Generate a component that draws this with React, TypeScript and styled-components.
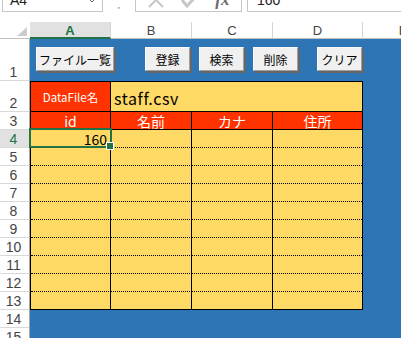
import { FC } from "react";
import styled, { createGlobalStyle, css } from "styled-components";

const GlobalStyle = createGlobalStyle`
  * {
    box-sizing: border-box;
  }
  body {
    margin: 0;
    background: #fff;
    font-family: "Noto Sans CJK JP", "Liberation Sans", sans-serif;
  }
`;

const BLUE = "#2e75b6";
const RED = "#ff3300";
const YELLOW = "#ffd966";
const GREEN = "#217346";

const COLUMNS = [
  { name: "A", width: 81 },
  { name: "B", width: 81 },
  { name: "C", width: 81 },
  { name: "D", width: 90 },
  { name: "E", width: 81 },
];

const ROWS = [
  { n: 1, h: 42 },
  { n: 2, h: 31 },
  { n: 3, h: 18 },
  ...Array.from({ length: 12 }, (_, i) => ({ n: i + 4, h: 18 })),
];

const BUTTONS = [
  { label: "ファイル一覧", width: 78, offset: 0 },
  { label: "登録", width: 45, offset: 31 },
  { label: "検索", width: 45, offset: 9 },
  { label: "削除", width: 45, offset: 9 },
  { label: "クリア", width: 45, offset: 19 },
];

const HEADERS = ["id", "名前", "カナ", "住所"];

const App = () => (
  <Page>
    <GlobalStyle />
    <FormulaBar>
      <NameBox>
        <span>A4</span>
        <svg width="8" height="5" viewBox="0 0 8 5">
          <path d="M1 1 L4 4 L7 1" fill="none" stroke="#666" strokeWidth="1" />
        </svg>
      </NameBox>
      <Dots>⋮</Dots>
      <FxBox>
        <svg width="18" height="18" viewBox="0 0 18 18">
          <path d="M2 2 L16 16 M16 2 L2 16" stroke="#c6c6c6" strokeWidth="2" />
        </svg>
        <svg width="20" height="18" viewBox="0 0 20 18">
          <path d="M2 9 L7 15 L18 3" fill="none" stroke="#c6c6c6" strokeWidth="3" />
        </svg>
        <Fx>fx</Fx>
      </FxBox>
      <ValueBox>160</ValueBox>
    </FormulaBar>

    <ColumnHeaderRow>
      <Corner>
        <svg width="10" height="9" viewBox="0 0 10 9">
          <polygon points="10,0 10,9 0,9" fill="#cdcdcd" />
        </svg>
      </Corner>
      {COLUMNS.map((c) => (
        <ColHead key={c.name} $w={c.width} $active={c.name === "A"}>
          {c.name}
        </ColHead>
      ))}
    </ColumnHeaderRow>

    <Body>
      <RowHeaders>
        {ROWS.map((r) => (
          <RowNum key={r.n} $h={r.h} $active={r.n === 4}>
            {r.n}
          </RowNum>
        ))}
      </RowHeaders>

      <BlueArea>
        <ButtonBar>
          {BUTTONS.map((b) => (
            <FormButton key={b.label} $w={b.width} $offset={b.offset}>
              {b.label}
            </FormButton>
          ))}
        </ButtonBar>

        <DataTable>
          <Cell $bg={RED} $color="#fff" $size={11.5} $align="center" $bottom="solid">
            DataFile名
          </Cell>
          <Cell $bg={YELLOW} $span={3} $last $size={16} $bottom="solid">
            <FileName>staff.csv</FileName>
          </Cell>

          {HEADERS.map((h, i) => (
            <Cell
              key={h}
              $bg={RED}
              $color="#fff"
              $size={14}
              $align="center"
              $bottom="solid"
              $last={i === HEADERS.length - 1}
            >
              {h}
            </Cell>
          ))}

          {Array.from({ length: 10 }, (_, row) =>
            HEADERS.map((h, col) => (
              <Cell
                key={`${row}-${h}`}
                $bg={YELLOW}
                $size={14}
                $align="flex-end"
                $bottom={row === 9 ? "none" : "dotted"}
                $last={col === HEADERS.length - 1}
                $selected={row === 0 && col === 0}
              >
                {row === 0 && col === 0 ? "160" : ""}
              </Cell>
            ))
          )}
        </DataTable>
      </BlueArea>
    </Body>
  </Page>
);

const Page = styled.div`
  width: 401px;
  height: 338px;
  overflow: hidden;
  display: flex;
  flex-direction: column;
`;

const FormulaBar = styled.div`
  display: flex;
  align-items: flex-end;
  height: 12px;
  padding-left: 2px;
  overflow: hidden;
  flex-shrink: 0;
`;

const boxBase = css`
  height: 24px;
  border: 1px solid #c6c6c6;
  display: flex;
  align-items: center;
  flex-shrink: 0;
`;

const NameBox = styled.div`
  ${boxBase}
  width: 101px;
  justify-content: space-between;
  padding: 0 6px 0 7px;
  font: 14px "Liberation Sans", sans-serif;
  color: #222;
`;

const Dots = styled.div`
  width: 32px;
  text-align: center;
  color: #a0a0a0;
  font: 14px "DejaVu Sans", sans-serif;
  align-self: center;
  margin-top: 12px;
  line-height: 0;
`;

const FxBox = styled.div`
  ${boxBase}
  width: 107px;
  justify-content: space-around;
  padding: 0 4px;
`;

const Fx = styled.span`
  font: italic bold 17px "Liberation Serif", serif;
  color: #6b6b6b;
`;

const ValueBox = styled.div`
  ${boxBase}
  flex: 1;
  margin-left: 5px;
  border-right: none;
  padding-left: 9px;
  font: 14px "Liberation Sans", sans-serif;
  color: #222;
`;

const ColumnHeaderRow = styled.div`
  display: flex;
  height: 17px;
  margin-top: 10px;
  flex-shrink: 0;
`;

const Corner = styled.div`
  width: 30px;
  flex-shrink: 0;
  display: flex;
  justify-content: flex-end;
  align-items: flex-end;
  padding: 0 3px 2px 0;
  border-bottom: 1px solid #c0c0c0;
`;

const ColHead = styled.div<{ $w: number; $active?: boolean }>`
  width: ${({ $w }) => $w}px;
  flex-shrink: 0;
  display: flex;
  align-items: center;
  justify-content: center;
  font: 13px "Liberation Sans", sans-serif;
  color: #444;
  border-right: 1px solid #d4d4d4;
  border-bottom: 1px solid #c0c0c0;

  ${({ $active }) =>
    $active &&
    css`
      background: #e1e1e1;
      color: ${GREEN};
      font-weight: bold;
      border-bottom: 2px solid ${GREEN};
      padding-top: 1px;
    `}
`;

const Body = styled.div`
  display: flex;
  flex: 1;
`;

const RowHeaders = styled.div`
  width: 30px;
  flex-shrink: 0;
  display: flex;
  flex-direction: column;
  border-right: 1px solid #ababab;
`;

const RowNum = styled.div<{ $h: number; $active?: boolean }>`
  height: ${({ $h }) => $h}px;
  flex-shrink: 0;
  display: flex;
  align-items: flex-end;
  justify-content: center;
  border-bottom: 1px solid #d9d9d9;
  font: 14px/16px "Liberation Sans", sans-serif;
  color: #444;
  padding-right: 2px;

  ${({ $active }) =>
    $active &&
    css`
      background: #e1e1e1;
      color: ${GREEN};
    `}
`;

const BlueArea = styled.div`
  flex: 1;
  background: ${BLUE};
  display: flex;
  flex-direction: column;
  align-items: flex-start;
`;

const ButtonBar = styled.div`
  height: 42px;
  display: flex;
  align-items: flex-start;
  padding: 8px 0 0 6px;
  flex-shrink: 0;
`;

const FormButton = styled.div<{ $w: number; $offset: number }>`
  width: ${({ $w }) => $w}px;
  margin-left: ${({ $offset }) => $offset}px;
  height: 24px;
  display: flex;
  align-items: center;
  justify-content: center;
  background: #f0f0f0;
  border: 1px solid;
  border-color: #fafafa #a0a0a0 #a0a0a0 #fafafa;
  box-shadow: 2px 2px 0 #666;
  font-size: 12px;
  color: #000;
  white-space: nowrap;
`;

const DataTable = styled.div`
  display: grid;
  grid-template-columns: 80px 81px 81px 89px;
  grid-template-rows: 30px 18px repeat(9, 18px) 17px;
  border: 1px solid #000;
`;

const Cell = styled.div<{
  $bg: string;
  $color?: string;
  $size: number;
  $align?: string;
  $bottom: "solid" | "dotted" | "none";
  $last?: boolean;
  $span?: number;
  $selected?: boolean;
}>`
  ${({ $bg, $color, $size, $align, $bottom, $last, $span }) => css`
    grid-column: span ${$span ?? 1};
    background: ${$bg};
    color: ${$color ?? "#000"};
    font-size: ${$size}px;
    display: flex;
    align-items: center;
    justify-content: ${$align ?? "flex-start"};
    padding: 0 3px;
    white-space: nowrap;
    border-right: ${$last ? "none" : "1px solid #000"};
    border-bottom: ${$bottom === "none" ? "none" : `1px ${$bottom} #000`};
  `}

  ${({ $selected }) =>
    $selected &&
    css`
      position: relative;
      z-index: 1;

      &::after {
        content: "";
        position: absolute;
        top: -2px;
        left: -2px;
        right: -2px;
        bottom: -1px;
        border: 2px solid ${GREEN};
      }

      &::before {
        content: "";
        position: absolute;
        right: -4px;
        bottom: -3px;
        width: 6px;
        height: 6px;
        background: ${GREEN};
        border: 1px solid #fff;
        z-index: 2;
      }
    `}
`;

const FileName = styled.span`
  letter-spacing: 0.6px;
  margin-top: 2px;
`;

export default App;
